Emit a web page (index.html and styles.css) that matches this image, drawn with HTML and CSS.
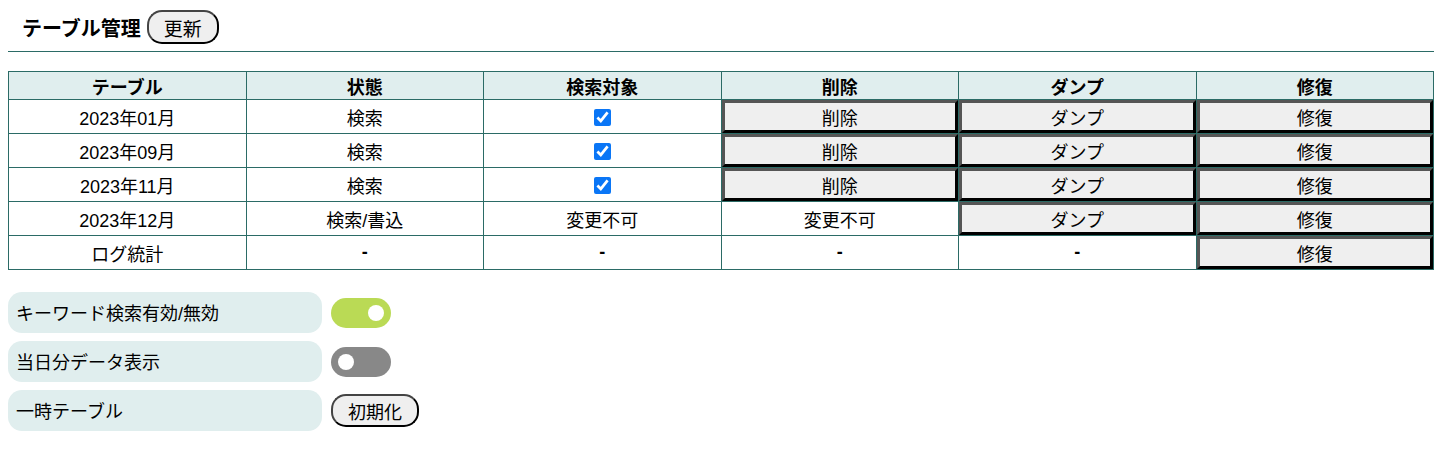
FILE: index.html
```html
<!DOCTYPE html>
<html lang="ja">
<head>
    <meta charset="UTF-8">
    <title>テーブル管理</title>
    <link rel="stylesheet" href="styles.css">
</head>
<body>
    <div class="title-bar">
        <h2>テーブル管理</h2>
        <button class="round-btn">更新</button>
    </div>

    <table class="tables">
        <thead>
            <tr>
                <th>テーブル</th>
                <th>状態</th>
                <th>検索対象</th>
                <th>削除</th>
                <th>ダンプ</th>
                <th>修復</th>
            </tr>
        </thead>
        <tbody>
            <tr>
                <td>2023年01月</td>
                <td>検索</td>
                <td><input type="checkbox" checked></td>
                <td class="btn-cell"><button>削除</button></td>
                <td class="btn-cell"><button>ダンプ</button></td>
                <td class="btn-cell"><button>修復</button></td>
            </tr>
            <tr>
                <td>2023年09月</td>
                <td>検索</td>
                <td><input type="checkbox" checked></td>
                <td class="btn-cell"><button>削除</button></td>
                <td class="btn-cell"><button>ダンプ</button></td>
                <td class="btn-cell"><button>修復</button></td>
            </tr>
            <tr>
                <td>2023年11月</td>
                <td>検索</td>
                <td><input type="checkbox" checked></td>
                <td class="btn-cell"><button>削除</button></td>
                <td class="btn-cell"><button>ダンプ</button></td>
                <td class="btn-cell"><button>修復</button></td>
            </tr>
            <tr>
                <td>2023年12月</td>
                <td>検索/書込</td>
                <td>変更不可</td>
                <td>変更不可</td>
                <td class="btn-cell"><button>ダンプ</button></td>
                <td class="btn-cell"><button>修復</button></td>
            </tr>
            <tr>
                <td>ログ統計</td>
                <td class="dash">-</td>
                <td class="dash">-</td>
                <td class="dash">-</td>
                <td class="dash">-</td>
                <td class="btn-cell"><button>修復</button></td>
            </tr>
        </tbody>
    </table>

    <div class="settings">
        <div class="setting">
            <div class="setting-label">キーワード検索有効/無効</div>
            <span class="toggle on"></span>
        </div>
        <div class="setting">
            <div class="setting-label">当日分データ表示</div>
            <span class="toggle"></span>
        </div>
        <div class="setting">
            <div class="setting-label">一時テーブル</div>
            <button class="round-btn small">初期化</button>
        </div>
    </div>
</body>
</html>
```

FILE: styles.css
```css
body {
    margin: 8px;
    font-family: "Liberation Sans", "Noto Sans CJK JP", sans-serif;
    color: #000;
    background: #fff;
}
.title-bar {
    display: flex;
    align-items: center;
    gap: 6px;
    padding: 2px 14px 7px;
    border-bottom: 1px solid #2b6b66;
}
.title-bar h2 {
    margin: 0;
    font-size: 20px;
    font-weight: bold;
}
.round-btn {
    height: 34px;
    padding: 0 15px;
    font-family: "Noto Sans CJK JP", sans-serif;
    font-size: 19px;
    background: #efefef;
    border: 2px solid;
    border-color: #444 #000 #000 #444;
    border-radius: 15px;
}
.round-btn.small {
    height: 33px;
    font-size: 18px;
}
.tables {
    width: 100%;
    margin-top: 19px;
    border-collapse: collapse;
    table-layout: fixed;
    font-size: 18px;
}
.tables th, .tables td {
    border: 1px solid #2b6b66;
    text-align: center;
    padding: 0;
}
.tables th {
    height: 27px;
    background: #e0eeee;
    font-weight: bold;
}
.tables td {
    height: 33px;
}
.tables td.dash {
    font-weight: bold;
}
.tables input[type="checkbox"] {
    width: 17px;
    height: 17px;
    margin: 0;
    vertical-align: middle;
    accent-color: #0a76f6;
}
.btn-cell button {
    display: block;
    width: 100%;
    height: 33px;
    font-family: "Noto Sans CJK JP", sans-serif;
    font-size: 18px;
    background: #efefef;
    border: 3px solid;
    border-color: #555 #000 #000 #555;
    padding: 0;
}
.settings {
    display: flex;
    flex-direction: column;
    gap: 8px;
    margin-top: 22px;
}
.setting {
    display: flex;
    align-items: center;
    gap: 9px;
}
.setting-label {
    display: flex;
    align-items: center;
    box-sizing: border-box;
    width: 314px;
    height: 41px;
    padding: 0 0 1px 8px;
    background: #e0eeee;
    border-radius: 14px;
    font-size: 18px;
}
.toggle {
    position: relative;
    display: inline-block;
    width: 60px;
    height: 30px;
    border-radius: 15px;
    background: #888;
}
.toggle::after {
    content: "";
    position: absolute;
    top: 7px;
    left: 7px;
    width: 16px;
    height: 16px;
    border-radius: 50%;
    background: #fff;
}
.toggle.on {
    background: #bada55;
}
.toggle.on::after {
    left: 37px;
}
```
